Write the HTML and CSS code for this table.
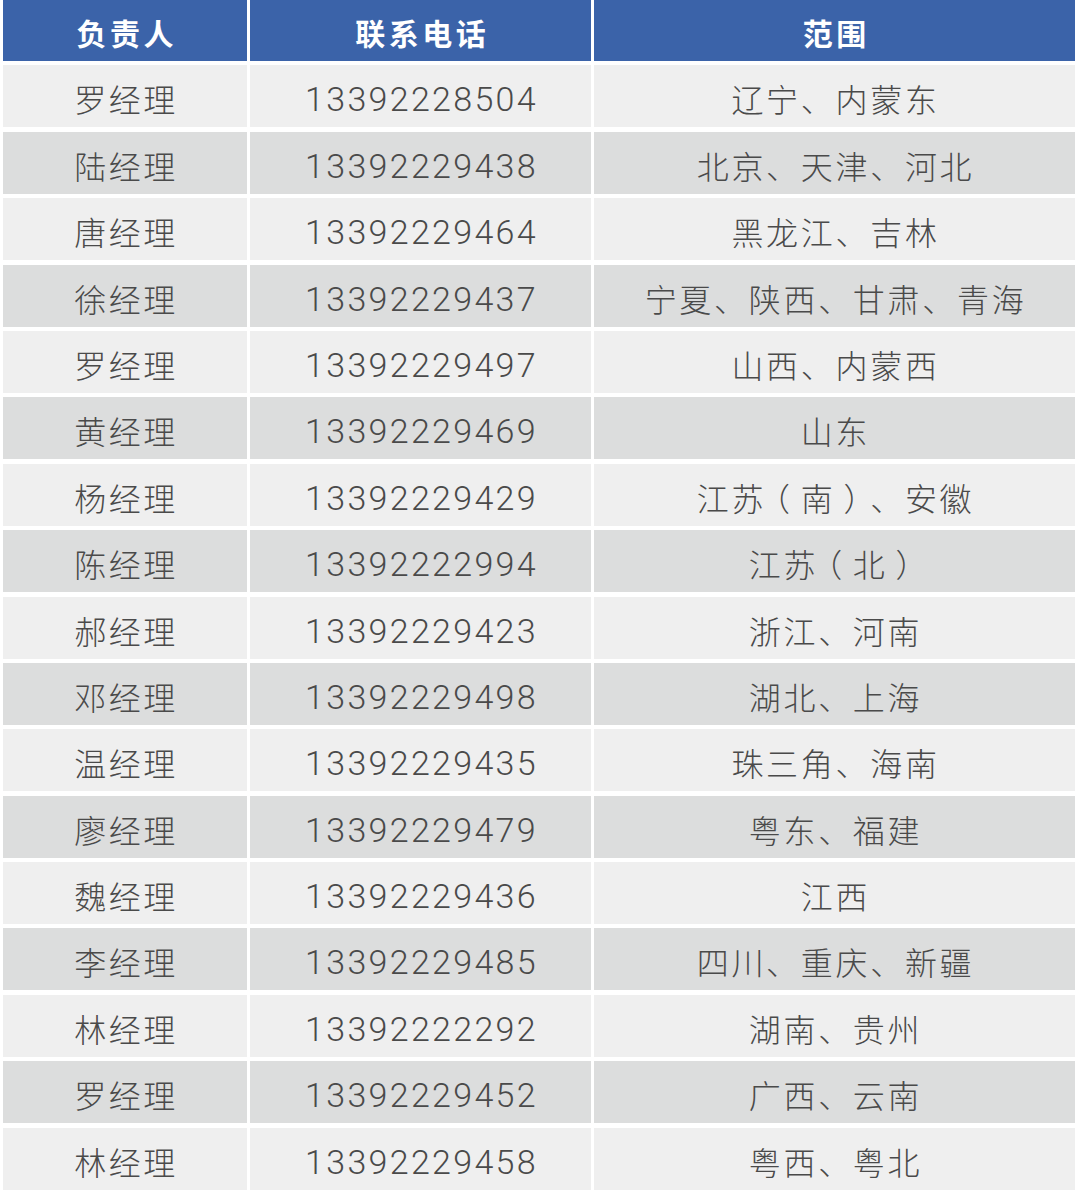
FILE: index.html
```html
<!DOCTYPE html>
<html lang="zh">
<head>
<meta charset="utf-8">
<title>负责人联系表</title>
<link rel="stylesheet" href="styles.css">
</head>
<body>
<div class="table">
  <div class="th">负责人</div><div class="th">联系电话</div><div class="th">范围</div>
  <div class="td name a">罗经理</div><div class="td num a">13392228504</div><div class="td area a">辽宁、内蒙东</div>
  <div class="td name b">陆经理</div><div class="td num b">13392229438</div><div class="td area b">北京、天津、河北</div>
  <div class="td name a">唐经理</div><div class="td num a">13392229464</div><div class="td area a">黑龙江、吉林</div>
  <div class="td name b">徐经理</div><div class="td num b">13392229437</div><div class="td area b">宁夏、陕西、甘肃、青海</div>
  <div class="td name a">罗经理</div><div class="td num a">13392229497</div><div class="td area a">山西、内蒙西</div>
  <div class="td name b">黄经理</div><div class="td num b">13392229469</div><div class="td area b">山东</div>
  <div class="td name a">杨经理</div><div class="td num a">13392229429</div><div class="td area a">江苏<span class="par">（</span>南<span class="par">）</span>、安徽</div>
  <div class="td name b">陈经理</div><div class="td num b">13392222994</div><div class="td area b">江苏<span class="par">（</span>北<span class="par">）</span></div>
  <div class="td name a">郝经理</div><div class="td num a">13392229423</div><div class="td area a">浙江、河南</div>
  <div class="td name b">邓经理</div><div class="td num b">13392229498</div><div class="td area b">湖北、上海</div>
  <div class="td name a">温经理</div><div class="td num a">13392229435</div><div class="td area a">珠三角、海南</div>
  <div class="td name b">廖经理</div><div class="td num b">13392229479</div><div class="td area b">粤东、福建</div>
  <div class="td name a">魏经理</div><div class="td num a">13392229436</div><div class="td area a">江西</div>
  <div class="td name b">李经理</div><div class="td num b">13392229485</div><div class="td area b">四川、重庆、新疆</div>
  <div class="td name a">林经理</div><div class="td num a">13392222292</div><div class="td area a">湖南、贵州</div>
  <div class="td name b">罗经理</div><div class="td num b">13392229452</div><div class="td area b">广西、云南</div>
  <div class="td name a">林经理</div><div class="td num a">13392229458</div><div class="td area a">粤西、粤北</div>
</div>
</body>
</html>
```
FILE: styles.css
```css
html, body {
  margin: 0;
  padding: 0;
  background: #ffffff;
}
body {
  padding-left: 3px;
  font-family: "Noto Sans CJK SC", "Noto Sans", sans-serif;
}
.table {
  display: grid;
  grid-template-columns: 244px 341px 481px;
  grid-template-rows: 61px;
  grid-auto-rows: 62px;
  column-gap: 3px;
  row-gap: 4.4px;
}
.th {
  background: #3b63a9;
  color: #ffffff;
  font-weight: 700;
  font-size: 30px;
  letter-spacing: 3.5px;
  text-indent: 3.5px;
  display: flex;
  align-items: center;
  justify-content: center;
  padding-top: 2px;
}
.td {
  display: flex;
  align-items: center;
  justify-content: center;
  color: #4a4a4a;
  font-size: 32px;
  font-weight: 300;
  padding-top: 4px;
}
.a { background: #efefef; }
.b { background: #dcdddd; }
.name {
  letter-spacing: 2.5px;
  padding-left: 2px;
}
.num {
  font-family: "Roboto", "Liberation Sans", Arial, sans-serif;
  font-weight: 300;
  font-size: 34px;
  letter-spacing: 2.3px;
  padding-left: 2px;
  padding-top: 6px;
}
.area {
  letter-spacing: 2.7px;
  padding-left: 2px;
}
.par {
  font-feature-settings: "halt" 1;
  padding: 0 0.25em;
}
```
